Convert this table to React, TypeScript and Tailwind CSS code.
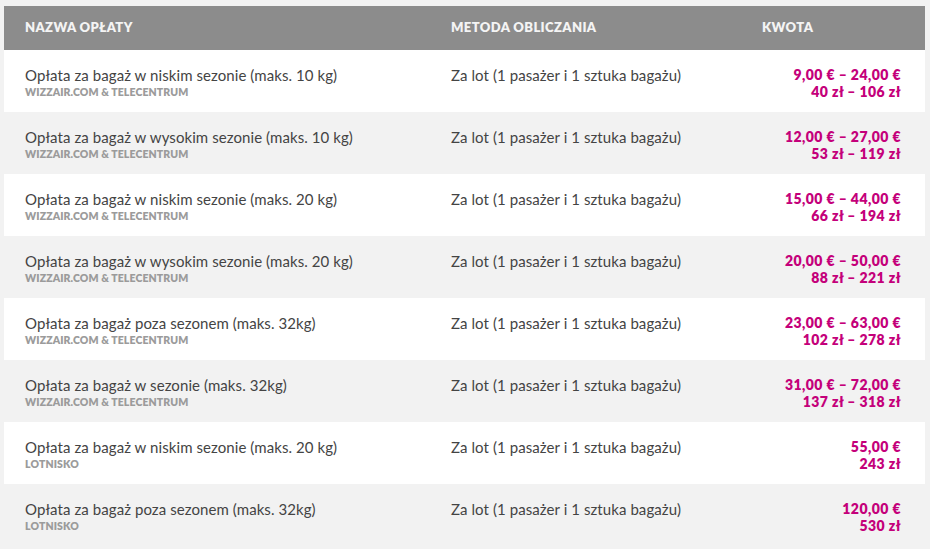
import React from 'react';

type Fee = {
  name: string;
  channel: string;
  method: string;
  eur: string;
  pln: string;
};

const METHOD = 'Za lot (1 pasażer i 1 sztuka bagażu)';
const WEB = 'WIZZAIR.COM & TELECENTRUM';

const fees: Fee[] = [
  { name: 'Opłata za bagaż w niskim sezonie (maks. 10 kg)', channel: WEB, method: METHOD, eur: '9,00 € – 24,00 €', pln: '40 zł – 106 zł' },
  { name: 'Opłata za bagaż w wysokim sezonie (maks. 10 kg)', channel: WEB, method: METHOD, eur: '12,00 € – 27,00 €', pln: '53 zł – 119 zł' },
  { name: 'Opłata za bagaż w niskim sezonie (maks. 20 kg)', channel: WEB, method: METHOD, eur: '15,00 € – 44,00 €', pln: '66 zł – 194 zł' },
  { name: 'Opłata za bagaż w wysokim sezonie (maks. 20 kg)', channel: WEB, method: METHOD, eur: '20,00 € – 50,00 €', pln: '88 zł – 221 zł' },
  { name: 'Opłata za bagaż poza sezonem (maks. 32kg)', channel: WEB, method: METHOD, eur: '23,00 € – 63,00 €', pln: '102 zł – 278 zł' },
  { name: 'Opłata za bagaż w sezonie (maks. 32kg)', channel: WEB, method: METHOD, eur: '31,00 € – 72,00 €', pln: '137 zł – 318 zł' },
  { name: 'Opłata za bagaż w niskim sezonie (maks. 20 kg)', channel: 'LOTNISKO', method: METHOD, eur: '55,00 €', pln: '243 zł' },
  { name: 'Opłata za bagaż poza sezonem (maks. 32kg)', channel: 'LOTNISKO', method: METHOD, eur: '120,00 €', pln: '530 zł' },
];

const headFont = "font-['Lato',sans-serif]";

const App: React.FC = () => {
  return (
    <div className="min-h-screen bg-[#f2f2f2] pt-[6px] pl-[4px]">
      <div className="w-[921px] bg-white">
        {/* Header */}
        <div className={`grid grid-cols-[426px_311px_184px] h-[44px] items-center bg-[#8c8c8c] text-[13px] font-extrabold uppercase tracking-[0.03em] text-[#f4f4f4] ${headFont}`}>
          <div className="pl-[21px]">Nazwa opłaty</div>
          <div className="pl-[21px]">Metoda obliczania</div>
          <div className="pl-[21px]">Kwota</div>
        </div>

        {/* Rows */}
        {fees.map((fee, i) => (
          <div
            key={i}
            className={`grid grid-cols-[426px_311px_184px] h-[62px] ${i % 2 === 1 ? 'bg-[#f2f2f2]' : 'bg-white'}`}
          >
            <div className="pl-[21px] pt-[16px]">
              <div className="text-[15px] leading-[18px] text-[#444444] font-['Lato',sans-serif] tracking-[0.005em]">{fee.name}</div>
              <div className={`text-[10.5px] leading-[16px] font-extrabold tracking-[0.01em] text-[#9b9b9b] ${headFont}`}>{fee.channel}</div>
            </div>
            <div className="pl-[21px] pt-[16px]">
              <div className="text-[15px] leading-[18px] text-[#444444] font-['Lato',sans-serif] tracking-[0.005em]">{fee.method}</div>
            </div>
            <div className={`pr-[24px] pt-[16px] text-right text-[14px] font-extrabold tracking-[0.03em] text-[#c4007a] ${headFont}`}>
              <div className="leading-[18px]">{fee.eur}</div>
              <div className="leading-[16px]">{fee.pln}</div>
            </div>
          </div>
        ))}
      </div>
    </div>
  );
};

export default App;
